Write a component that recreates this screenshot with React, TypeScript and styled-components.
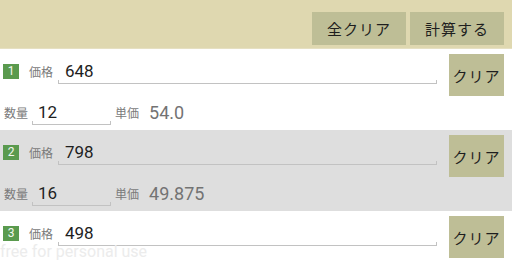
import React from 'react'
import styled, { createGlobalStyle } from 'styled-components'

const COLORS = {
  header: '#dfd8b0',
  button: '#bebe96',
  stripe: '#dedede',
  white: '#ffffff',
  badge: '#5a9a4e',
  label: '#7a7a7a',
  value: '#737373',
  text: '#1e1e1e',
  line: '#c2c2c2',
}

const JP = `"Noto Sans CJK JP", "Noto Sans", sans-serif`
const NUM = `Roboto, "Noto Sans CJK JP", sans-serif`

const GlobalStyle = createGlobalStyle`
  html, body {
    margin: 0;
    padding: 0;
    overflow: hidden;
    background: ${COLORS.white};
  }
  body {
    font-family: ${JP};
  }
`

const Screen = styled.div`
  position: relative;
  width: 512px;
  height: 262px;
  overflow: hidden;
`

const Toolbar = styled.div`
  display: flex;
  justify-content: flex-end;
  gap: 4px;
  height: 49px;
  box-sizing: border-box;
  padding: 12px 8px 0;
  background: ${COLORS.header};
  border-bottom: 1px solid #e6e0c2;
`

const ToolButton = styled.button`
  width: 94px;
  height: 33px;
  border: none;
  margin: 0;
  padding: 0;
  background: ${COLORS.button};
  color: ${COLORS.text};
  font-family: ${JP};
  font-size: 15px;
  letter-spacing: 1px;
`

const Row = styled.div<{ striped: boolean }>`
  display: flex;
  height: 81px;
  box-sizing: border-box;
  padding: 5px 8px 0 3px;
  background: ${({ striped }) => (striped ? COLORS.stripe : COLORS.white)};
`

const Fields = styled.div`
  flex: 1;
  display: flex;
  flex-direction: column;
  margin-top: -5px;
`

const Line = styled.div<{ second?: boolean }>`
  display: flex;
  align-items: center;
  height: ${({ second }) => (second ? 30 : 44)}px;
  padding: ${({ second }) => (second ? '4px 0 2px 1px' : '0')};
`

const Badge = styled.div`
  width: 16px;
  height: 15px;
  margin-right: 10px;
  background: ${COLORS.badge};
  color: #f4f8f2;
  font-family: ${NUM};
  font-size: 12px;
  line-height: 15px;
  text-align: center;
`

const Label = styled.span<{ gap?: number }>`
  margin-right: ${({ gap }) => gap ?? 5}px;
  color: ${COLORS.label};
  font-family: ${JP};
  font-size: 12px;
  white-space: nowrap;
`

const Field = styled.div<{ width?: number }>`
  position: relative;
  ${({ width }) => (width ? `width: ${width}px;` : 'flex: 1;')}
  height: 26px;
  margin-right: 4px;

  &::after {
    content: '';
    position: absolute;
    left: 0;
    right: 0;
    bottom: 0;
    height: 3px;
    border: 1px solid ${COLORS.line};
    border-top: none;
  }
`

const Input = styled.input<{ inset?: number }>`
  width: 100%;
  height: 100%;
  box-sizing: border-box;
  border: none;
  outline: none;
  background: transparent;
  padding: 0 0 2px ${({ inset }) => inset ?? 7}px;
  color: ${COLORS.text};
  font-family: ${NUM};
  font-size: 17px;
`

const Value = styled.span`
  margin-left: 5px;
  color: ${COLORS.value};
  font-family: ${NUM};
  font-size: 18px;
`

const ClearButton = styled.button`
  width: 55px;
  height: 42px;
  margin: 0 0 0 8px;
  padding: 0;
  border: none;
  background: ${COLORS.button};
  color: ${COLORS.text};
  font-family: ${JP};
  font-size: 15px;
  letter-spacing: 1px;
`

const Watermark = styled.div`
  position: absolute;
  left: 0;
  bottom: 1px;
  color: #ececec;
  font-family: ${NUM};
  font-size: 16px;
  line-height: 19px;
  pointer-events: none;
`

interface Item {
  price: string
  count: string
  unit: string
}

const items: Item[] = [
  { price: '648', count: '12', unit: '54.0' },
  { price: '798', count: '16', unit: '49.875' },
  { price: '498', count: '', unit: '' },
]

export default function App() {
  return (
    <Screen>
      <GlobalStyle />
      <Toolbar>
        <ToolButton>全クリア</ToolButton>
        <ToolButton>計算する</ToolButton>
      </Toolbar>
      {items.map((item, i) => (
        <Row key={i} striped={i % 2 === 1}>
          <Fields>
            <Line>
              <Badge>{i + 1}</Badge>
              <Label>価格</Label>
              <Field>
                <Input defaultValue={item.price} />
              </Field>
            </Line>
            <Line second>
              <Label gap={4}>数量</Label>
              <Field width={79}>
                <Input defaultValue={item.count} inset={6} />
              </Field>
              <Label>単価</Label>
              <Value>{item.unit}</Value>
            </Line>
          </Fields>
          <ClearButton>クリア</ClearButton>
        </Row>
      ))}
      <Watermark>free for personal use</Watermark>
    </Screen>
  )
}
